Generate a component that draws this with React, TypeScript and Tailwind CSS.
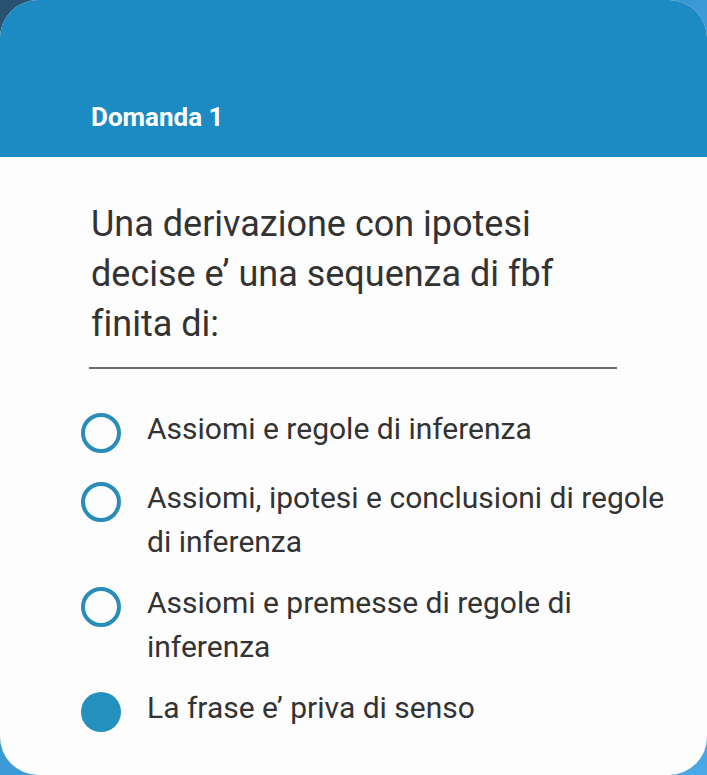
const options = [
  { label: 'Assiomi e regole di inferenza', checked: false },
  { label: 'Assiomi, ipotesi e conclusioni di regole di inferenza', checked: false },
  { label: 'Assiomi e premesse di regole di inferenza', checked: false },
  { label: 'La frase e’ priva di senso', checked: true },
]

const Radio = ({ checked }: { checked: boolean }) =>
  checked ? (
    <span className="block w-[40px] h-[40px] rounded-full bg-[#2490bd] shrink-0" />
  ) : (
    <span className="block w-[40px] h-[40px] rounded-full border-[4px] border-[#2a8db8] shrink-0" />
  )

export default function App() {
  return (
    <div className="w-[707px] h-[775px] overflow-hidden bg-gradient-to-br from-[#27506e] via-[#3c9ad6] to-[#4ba8e6] font-['Roboto',sans-serif] [font-variant-ligatures:none]">
      <div className="h-full bg-[#fdfdfd] rounded-[38px] overflow-hidden flex flex-col">
        <div className="h-[157px] bg-[#1c8bc4] shrink-0 pl-[91px] pt-[101px]">
          <p className="text-[26px] leading-[32px] font-bold text-white">Domanda 1</p>
        </div>

        <div className="pl-[91px] pr-[90px] pt-[42px]">
          <p className="text-[36px] leading-[50px] text-[#333333]">
            Una derivazione con ipotesi decise e’ una sequenza di fbf finita di:
          </p>
          <div className="mt-[18px] h-[2px] bg-[#6b6b6b] -ml-[2px]" />
        </div>

        <div className="pl-[81px] pr-[25px] pt-[38px] flex flex-col gap-[17px]">
          {options.map((option) => (
            <div key={option.label} className="flex items-start gap-[26px] min-h-[52px]">
              <div className="h-[52px] flex items-center">
                <Radio checked={option.checked} />
              </div>
              <p className="text-[30px] leading-[44px] text-[#333333]">{option.label}</p>
            </div>
          ))}
        </div>
      </div>
    </div>
  )
}
